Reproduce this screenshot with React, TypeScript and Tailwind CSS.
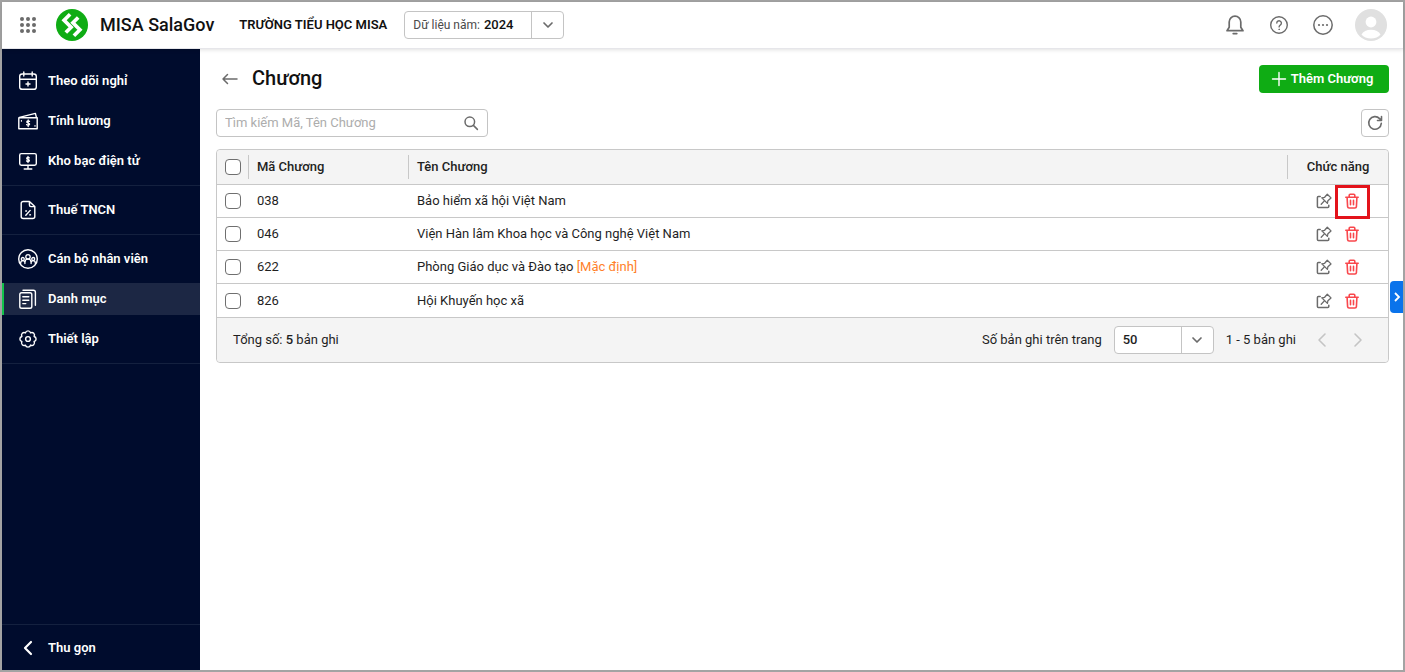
import React from 'react';
import type { ReactNode } from 'react';

function Svg({ size = 20, children, className = '' }: { size?: number; children: ReactNode; className?: string }) {
  return (
    <svg
      width={size}
      height={size}
      viewBox={`0 0 ${size} ${size}`}
      fill="none"
      stroke="currentColor"
      strokeWidth="1.4"
      strokeLinecap="round"
      strokeLinejoin="round"
      className={`shrink-0 ${className}`}
      aria-hidden="true"
    >
      {children}
    </svg>
  );
}

const CalendarIcon = () => (
  <Svg>
    <rect x="1.7" y="3" width="16.6" height="15.3" rx="2.4" />
    <path d="M2 8.2h16M5.8 1v4M14.2 1v4M10 11v4M8 13h4" />
  </Svg>
);

const MoneyIcon = () => (
  <Svg>
    <path d="M.8 6.8h18.4v11H.8zM1.4 6.4 17.4 2.4l1 4" />
    <path d="M11.5 10.4c-.5-.7-2.7-.8-2.7.5 0 1.4 2.8.8 2.8 2.2 0 1.3-2.4 1.3-3 .5M10.2 9v6.6" strokeWidth="1.3" />
    <path d="M3.4 9.4v1M17 14.4v1" strokeWidth="1" />
  </Svg>
);

const MonitorIcon = () => (
  <Svg>
    <rect x="1.7" y="2.6" width="16.6" height="11.6" rx="1.6" />
    <path d="M10 14.4v3.2M6.2 18h7.6" />
    <path d="M11.3 6.9c-.5-.7-2.6-.7-2.6.5 0 1.3 2.7.8 2.7 2.1 0 1.2-2.3 1.2-2.8.4M10 5.4v6.2" strokeWidth="1.3" />
  </Svg>
);

const TaxIcon = () => (
  <Svg>
    <path d="M11.4 1.5H5.2a2 2 0 0 0-2 2v13a2 2 0 0 0 2 2h9.6a2 2 0 0 0 2-2V6.6zM11.4 1.5v3.6a1.5 1.5 0 0 0 1.5 1.5h3.9M12.2 10.4l-4.4 4.8" />
    <circle cx="8" cy="11" r=".6" fill="currentColor" strokeWidth=".6" />
    <circle cx="12" cy="14.8" r=".6" fill="currentColor" strokeWidth=".6" />
  </Svg>
);

const StaffIcon = () => (
  <Svg>
    <circle cx="10" cy="10" r="9.3" />
    <g strokeWidth="1.3">
      <circle cx="10" cy="7.8" r="2.2" />
      <path d="M6.9 14.6v-1.4a3.1 3.1 0 0 1 6.2 0v1.4" />
      <circle cx="4.8" cy="10" r="1.5" />
      <circle cx="15.2" cy="10" r="1.5" />
      <path d="M2.6 14.4c0-1.6.8-2.8 2.2-2.8 1 0 1.6.5 1.9 1.2M17.4 14.4c0-1.6-.8-2.8-2.2-2.8-1 0-1.6.5-1.9 1.2" />
    </g>
  </Svg>
);

const CategoryIcon = () => (
  <Svg>
    <rect x="1.8" y="3.8" width="12" height="15.4" rx="1.8" />
    <path d="M5 1.2h10.4a2 2 0 0 1 2 2v13M4.8 7.8h6M4.8 11.2h6M4.8 14.6h3" />
  </Svg>
);

const GearIcon = () => (
  <Svg>
    <circle cx="10" cy="10" r="2.4" />
    <path d="M7.470 3.900a2.600 2.600 0 0 1 5.060 0 2.600 2.600 0 0 1 3.570 3.570 2.600 2.600 0 0 1 0 5.060 2.600 2.600 0 0 1-3.570 3.570 2.600 2.600 0 0 1-5.060 0 2.600 2.600 0 0 1-3.570-3.570 2.600 2.600 0 0 1 0-5.060 2.600 2.600 0 0 1 3.570-3.570z" />
  </Svg>
);

const ChevronDown = () => (
  <Svg size={16} className="text-[#6b6b6b]">
    <path d="m4 6 4 4 4-4" strokeWidth="1.7" />
  </Svg>
);

function Logo() {
  return (
    <svg width="32" height="32" viewBox="0 0 32 32" className="shrink-0" aria-hidden="true">
      <circle cx="16" cy="16" r="16" fill="#0fac14" />
      <g stroke="#fff" strokeWidth="3.7" fill="none" strokeLinejoin="miter">
        <path d="M14.100 5.200 8.100 11.200l7 7-5.300 5.300" />
        <path d="M17.900 26.800 23.900 20.800l-7-7 5.300-5.300" />
      </g>
    </svg>
  );
}

interface NavItem {
  label: string;
  icon: ReactNode;
  active?: boolean;
}

const navGroups: NavItem[][] = [
  [
    { label: 'Theo dõi nghỉ', icon: <CalendarIcon /> },
    { label: 'Tính lương', icon: <MoneyIcon /> },
    { label: 'Kho bạc điện tử', icon: <MonitorIcon /> },
  ],
  [{ label: 'Thuế TNCN', icon: <TaxIcon /> }],
  [
    { label: 'Cán bộ nhân viên', icon: <StaffIcon /> },
    { label: 'Danh mục', icon: <CategoryIcon />, active: true },
    { label: 'Thiết lập', icon: <GearIcon /> },
  ],
];

function Sidebar() {
  return (
    <nav className="flex w-[198px] shrink-0 flex-col bg-[#000c2d] pt-2 font-semibold text-white">
      {navGroups.map((group, i) => (
        <ul key={i} className="flex flex-col gap-2 border-b border-[#14213f] py-2">
          {group.map((item) => (
            <li key={item.label}>
              <a
                href="#"
                aria-current={item.active ? 'page' : undefined}
                className={`flex h-8 items-center gap-2.5 border-l-2 pl-3.5 ${
                  item.active ? 'border-[#12c44b] bg-[#1c2744]' : 'border-transparent'
                }`}
              >
                {item.icon}
                {item.label}
              </a>
            </li>
          ))}
        </ul>
      ))}
      <button className="mt-auto flex h-[46px] items-center gap-2.5 border-t border-[#14213f] pl-4 text-left">
        <Svg>
          <path d="m13 4-6 6 6 6" strokeWidth="2.2" />
        </Svg>
        Thu gọn
      </button>
    </nav>
  );
}

function Header() {
  return (
    <header className="z-10 flex h-[47px] shrink-0 items-center border-b border-[#e6e6ea] bg-white px-4 text-[#6b6b6b] shadow-[0_1px_4px_rgba(0,0,0,0.12)]">
      <button aria-label="Ứng dụng">
        <svg width="20" height="20" viewBox="0 0 20 20" fill="currentColor" aria-hidden="true">
          {[4, 10, 16].map((y) => [4, 10, 16].map((x) => <circle key={`${x}-${y}`} cx={x} cy={y} r="2" />))}
        </svg>
      </button>
      <a href="#" className="ml-[18px] flex items-center gap-3 text-lg font-medium text-[#111]">
        <Logo />
        MISA SalaGov
      </a>
      <span className="ml-[25px] font-semibold text-[#111]">TRƯỜNG TIỂU HỌC MISA</span>
      <div className="relative ml-[17px] flex h-7 w-40 items-center rounded border border-[#c4c4c4] pl-2">
        <label htmlFor="year" className="shrink-0 text-xs text-[#4a4a4a]">
          Dữ liệu năm:
        </label>
        <select id="year" className="h-full min-w-0 flex-1 appearance-none pl-1 font-medium text-[#111]">
          <option>2024</option>
        </select>
        <span className="pointer-events-none absolute inset-y-0 right-0 flex w-8 items-center justify-center border-l border-[#c4c4c4]">
          <ChevronDown />
        </span>
      </div>
      <div className="ml-auto flex items-center gap-6">
        <button aria-label="Thông báo">
          <Svg>
            <path d="M10 1.2a5.8 5.8 0 0 0-5.8 5.8v5.2L2 15.7h16l-2.2-3.500V7A5.8 5.8 0 0 0 10 1.2zM8.2 18.600h3.600" strokeWidth="1.7" />
          </Svg>
        </button>
        <button aria-label="Trợ giúp">
          <Svg>
            <circle cx="10" cy="10" r="8.3" />
            <path d="M7.8 8.1a2.3 2.3 0 1 1 3.7 1.800c-.9.700-1.400 1-1.400 2" />
            <circle cx="10.1" cy="14.3" r=".4" fill="currentColor" strokeWidth=".8" />
          </Svg>
        </button>
        <button aria-label="Thêm">
          <Svg>
            <circle cx="10" cy="10" r="9.2" strokeWidth="1.5" />
            <g fill="currentColor" stroke="none">
              <circle cx="6" cy="10" r="1.1" />
              <circle cx="10" cy="10" r="1.1" />
              <circle cx="14" cy="10" r="1.1" />
            </g>
          </Svg>
        </button>
        <button aria-label="Tài khoản" className="-ml-0.5">
          <svg width="32" height="32" viewBox="0 0 32 32" aria-hidden="true">
            <circle cx="16" cy="16" r="16" fill="#e0e0e0" />
            <circle cx="16" cy="13" r="5.4" fill="#fff" />
            <path d="M6.5 25.5C8 22.5 11.6 20.8 16 20.8s8 1.7 9.5 4.7C23.5 28 20 29.5 16 29.5S8.5 28 6.5 25.500z" fill="#fff" />
          </svg>
        </button>
      </div>
    </header>
  );
}

interface Chapter {
  code: string;
  name: string;
  isDefault?: boolean;
  marked?: boolean;
}

const chapters: Chapter[] = [
  { code: '038', name: 'Bảo hiểm xã hội Việt Nam', marked: true },
  { code: '046', name: 'Viện Hàn lâm Khoa học và Công nghệ Việt Nam' },
  { code: '622', name: 'Phòng Giáo dục và Đào tạo', isDefault: true },
  { code: '826', name: 'Hội Khuyến học xã' },
];

function Checkbox({ label }: { label: string }) {
  return (
    <input
      type="checkbox"
      aria-label={label}
      className="block size-4 appearance-none rounded border border-[#6f6f6f] bg-white checked:bg-[#0fac14]"
    />
  );
}

function ChapterTable() {
  return (
    <div className="mt-3 rounded border border-[#c8c8c8]">
      <table className="w-full table-fixed border-separate border-spacing-0 text-left">
        <colgroup>
          <col className="w-8" />
          <col className="w-40" />
          <col />
          <col className="w-[100px]" />
        </colgroup>
        <thead>
          <tr className="h-[35px] bg-[#f4f4f4] [&>th]:border-b [&>th]:border-[#c8c8c8] [&>th]:font-medium">
            <th className="rounded-tl p-0">
              <div className="flex h-6 items-center border-r border-[#c8c8c8] pl-2">
                <Checkbox label="Chọn tất cả" />
              </div>
            </th>
            <th className="p-0">
              <div className="flex h-6 items-center border-r border-[#c8c8c8] pl-2">Mã Chương</div>
            </th>
            <th className="p-0">
              <div className="flex h-6 items-center border-r border-[#c8c8c8] pl-2">Tên Chương</div>
            </th>
            <th className="rounded-tr p-0 text-center">Chức năng</th>
          </tr>
        </thead>
        <tbody>
          {chapters.map((c) => (
            <tr key={c.code} className="h-[33px] last:h-[34px] [&>td]:border-b [&>td]:border-[#c8c8c8]">
              <td className="p-0 pl-2">
                <Checkbox label={`Chọn ${c.name}`} />
              </td>
              <td className="p-0 pl-2">{c.code}</td>
              <td className="p-0 pl-2">
                {c.name}
                {c.isDefault && <span className="text-[#ff7f2a]"> [Mặc định]</span>}
              </td>
              <td className="p-0">
                <div className="flex items-center gap-3 pl-7">
                  <button aria-label={`Sửa ${c.name}`} className="text-[#6b6b6b]">
                    <Svg size={16}>
                      <path d="M4.2 3.4H2.4a1 1 0 0 0-1 1v9.200a1 1 0 0 0 1 1h9.400a1 1 0 0 0 1-1v-1.400" strokeWidth="1.5" />
                      <path d="m11.3 1.2 3.7 3.7-3.1 2.800-.5 2.700-5.600-5.600 2.800-.5zM8.600 7.600l-3.400 3.600" strokeWidth="1.3" />
                    </Svg>
                  </button>
                  <button aria-label={`Xóa ${c.name}`} className="relative text-[#f9474c]">
                    <Svg size={16}>
                      <path d="M1.8 4.2h12.4M5.2 4V2.2a1 1 0 0 1 1-1h3.600a1 1 0 0 1 1 1V4M3.1 4.400l.5 9.200a1.500 1.500 0 0 0 1.500 1.400h5.800a1.500 1.500 0 0 0 1.500-1.400l.5-9.200M6.500 7.400v4.400M9.500 7.400v4.400" strokeWidth="1.6" />
                    </Svg>
                    {c.marked && (
                      <span className="absolute -top-2 -left-[9px] h-[34px] w-[35px] border-3 border-[#e3131b]" />
                    )}
                  </button>
                </div>
              </td>
            </tr>
          ))}
        </tbody>
      </table>
      <div className="flex h-11 items-center rounded-b bg-[#f4f4f4] pr-5 pl-4">
        <span>
          Tổng số: <span className="font-medium">5</span> bản ghi
        </span>
        <label htmlFor="page-size" className="mr-3 ml-auto">
          Số bản ghi trên trang
        </label>
        <div className="relative mr-3 h-7 w-[100px] rounded border border-[#c4c4c4] bg-white">
          <select id="page-size" defaultValue="50" className="h-full w-full appearance-none pl-2 font-medium">
            <option>50</option>
          </select>
          <span className="pointer-events-none absolute inset-y-0 right-0 flex w-8 items-center justify-center border-l border-[#c4c4c4]">
            <ChevronDown />
          </span>
        </div>
        <span>1 - 5 bản ghi</span>
        <div className="ml-4 flex gap-4 text-[#c4c4c4]">
          <button aria-label="Trang trước" disabled>
            <Svg>
              <path d="m13 4-6 6 6 6" strokeWidth="1.6" />
            </Svg>
          </button>
          <button aria-label="Trang sau" disabled>
            <Svg>
              <path d="m7 4 6 6-6 6" strokeWidth="1.6" />
            </Svg>
          </button>
        </div>
      </div>
    </div>
  );
}

export default function App() {
  return (
    <div className="relative flex min-h-screen flex-col border-2 border-[#a3a3a3] bg-white font-[Roboto,sans-serif] text-[13px] leading-5 text-[#1f1f1f]">
      <Header />
      <div className="flex flex-1">
        <Sidebar />
        <main className="min-w-0 flex-1 py-4 pr-3.5 pl-4">
          <div className="flex h-7 items-center">
            <button aria-label="Quay lại" className="ml-1 text-[#6b6b6b]">
              <Svg>
                <path d="M17 10H3M7.5 5.500 3 10l4.500 4.500" strokeWidth="1.5" />
              </Svg>
            </button>
            <h1 className="ml-3 pb-0.5 text-xl font-medium text-[#111]">Chương</h1>
            <button className="ml-auto flex h-7 w-[130px] items-center justify-center gap-1 rounded-sm bg-[#0fac14] pr-1 font-semibold text-white">
              <Svg size={16}>
                <path d="M8 1.500v13M1.500 8h13" />
              </Svg>
              Thêm Chương
            </button>
          </div>
          <div className="mt-4 flex items-center justify-between">
            <div className="flex h-7 w-[272px] items-center rounded border border-[#c4c4c4] px-2">
              <input
                type="search"
                aria-label="Tìm kiếm"
                placeholder="Tìm kiếm Mã, Tên Chương"
                className="min-w-0 flex-1 outline-none placeholder:text-[#adadad]"
              />
              <Svg size={16} className="text-[#6b6b6b]">
                <circle cx="6.8" cy="6.8" r="4.8" strokeWidth="1.5" />
                <path d="m10.4 10.4 4 4" strokeWidth="1.5" />
              </Svg>
            </div>
            <button aria-label="Tải lại" className="flex size-7 items-center justify-center rounded border border-[#c4c4c4] text-[#6b6b6b]">
              <Svg size={16}>
                <path d="M14.3 8.4A6.3 6.3 0 1 1 12.6 3.600l1.700 1.700M14.500 1.500v4h-4" strokeWidth="1.6" />
              </Svg>
            </button>
          </div>
          <ChapterTable />
        </main>
      </div>
      <button
        aria-label="Mở bảng bên"
        className="absolute top-[279px] right-0 flex h-8 w-[13px] items-center justify-center rounded-l-sm bg-[#0a73eb] text-white"
      >
        <svg width="8" height="12" viewBox="0 0 8 12" fill="none" stroke="currentColor" strokeWidth="1.8" aria-hidden="true">
          <path d="m2 2 4 4-4 4" />
        </svg>
      </button>
    </div>
  );
}
